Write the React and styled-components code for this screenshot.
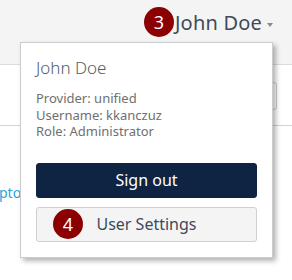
import React from "react";
import styled, { createGlobalStyle } from "styled-components";

const Global = createGlobalStyle`
  body {
    margin: 0;
    font-family: "Noto Sans", "Open Sans", sans-serif;
    background: #fff;
  }
`;

const Page = styled.div`
  position: relative;
  width: 292px;
  height: 280px;
  overflow: hidden;
`;

const Header = styled.div`
  height: 65px;
  box-sizing: border-box;
  background: #f4f4f4;
  border-bottom: 1px solid #dcdcdc;
  display: flex;
  justify-content: flex-end;
  align-items: flex-start;
  padding: 7px 19px 0 0;
`;

const UserMenu = styled.div`
  display: flex;
  align-items: center;
  gap: 1px;
`;

const Badge = styled.div`
  width: 30px;
  height: 30px;
  border-radius: 50%;
  background: #8b0000;
  color: #fff;
  font-size: 18px;
  display: flex;
  align-items: center;
  justify-content: center;
  flex-shrink: 0;
`;

const UserName = styled.span`
  font-size: 20px;
  color: #3f4a5a;
  letter-spacing: 0.2px;
`;

const Caret = styled.span`
  width: 0;
  height: 0;
  margin: 6px 0 0 4px;
  border-left: 3.5px solid transparent;
  border-right: 3.5px solid transparent;
  border-top: 4px solid #8a8a8a;
`;

const Toolbar = styled.div`
  display: flex;
  justify-content: flex-end;
  padding: 17px 15px 15px 0;
  border-bottom: 1px solid #d4d4d4;
`;

const SearchBox = styled.div`
  width: 200px;
  height: 28px;
  box-sizing: border-box;
  border: 1px solid #cfcfcf;
  border-radius: 3px;
  background: #fff;
`;

const LinkText = styled.div`
  margin-top: 57px;
  margin-left: -1px;
  font-size: 14px;
  color: #2aa4dc;
`;

const Dropdown = styled.div`
  position: absolute;
  top: 42px;
  left: 20px;
  width: 253px;
  box-sizing: border-box;
  background: #fff;
  border: 1px solid #cccccc;
  box-shadow: 3px 3px 5px rgba(0, 0, 0, 0.3);
  padding: 13px 15px 15px;
`;

const Name = styled.div`
  font-size: 17px;
  font-weight: 300;
  color: #555d66;
  line-height: 24px;
`;

const Info = styled.div`
  margin-top: 10px;
  font-size: 13px;
  line-height: 16.5px;
  color: #6f6f6f;
`;

const Button = styled.button`
  position: relative;
  display: block;
  width: 100%;
  height: 35px;
  box-sizing: border-box;
  border-radius: 3px;
  font-family: inherit;
  font-size: 16px;
  cursor: pointer;
  background: ${(p) => (p.$primary ? "#0e2442" : "#f4f4f4")};
  color: ${(p) => (p.$primary ? "#fff" : "#3f4a5a")};
  border: 1px solid ${(p) => (p.$primary ? "#0e2442" : "#d0d0d0")};
  margin-top: ${(p) => (p.$primary ? "23px" : "9px")};
`;

const ButtonBadge = styled(Badge)`
  position: absolute;
  left: 16px;
  top: 50%;
  transform: translateY(-50%);
`;

export default function App() {
  return (
    <Page>
      <Global />
      <Header>
        <UserMenu>
          <Badge>3</Badge>
          <UserName>John Doe</UserName>
          <Caret />
        </UserMenu>
      </Header>
      <Toolbar>
        <SearchBox />
      </Toolbar>
      <LinkText>ptor</LinkText>
      <Dropdown>
        <Name>John Doe</Name>
        <Info>
          <div>Provider: unified</div>
          <div>Username: kkanczuz</div>
          <div>Role: Administrator</div>
        </Info>
        <Button $primary>Sign out</Button>
        <Button>
          <ButtonBadge>4</ButtonBadge>
          User Settings
        </Button>
      </Dropdown>
    </Page>
  );
}
